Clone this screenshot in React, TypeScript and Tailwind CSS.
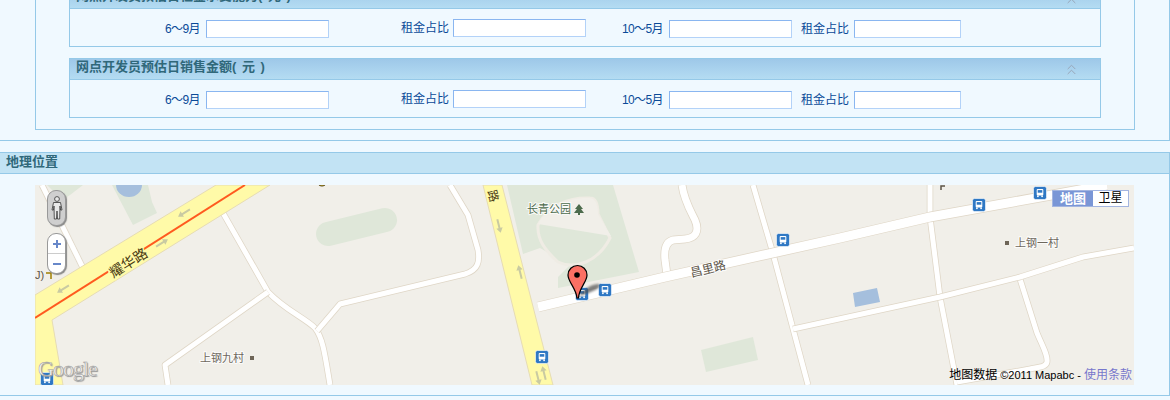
import { ChevronsUp } from 'lucide-react';

const CJK = "font-['Liberation_Sans','Noto_Sans_CJK_SC',sans-serif]";

function FieldLabel({ width, tight, children }: { width: string; tight?: boolean; children: string }) {
  return (
    <span className={`${width} ${tight ? 'tracking-[-0.6px]' : ''} shrink-0 text-right text-[12px] leading-[18px] text-[#0a4a98]`}>
      {children}
    </span>
  );
}

function Field({ width, className = '' }: { width: string; className?: string }) {
  return (
    <input
      className={`${width} ${className} h-[18px] shrink-0 border border-t-[#8ab6f0] border-l-[#8ab6f0] border-r-[#b3d2f8] border-b-[#b3d2f8] bg-white`}
    />
  );
}

function Section({ title }: { title: string }) {
  return (
    <div className="ml-[33px] w-[1032px] border border-[#95c9e8]">
      <div className="flex h-[21px] items-center justify-between border-b border-[#95c9e8] bg-gradient-to-b from-[#9ec8e9] to-[#b4dcf2] pb-[4px] pl-[6px] pr-[20px]">
        <span className="whitespace-nowrap text-[13px] font-bold leading-[16px] text-[#30687a] [word-spacing:2px]">{title}</span>
        <ChevronsUp size={17} strokeWidth={1.4} className="mt-[5px] text-[#98a6b8]" />
      </div>
      <div className="flex h-[37px] items-start pt-[11px]">
        <FieldLabel width="w-[130px]" tight>6～9月</FieldLabel>
        <Field width="w-[123px]" className="ml-[6px]" />
        <span className="-mt-px flex items-start">
          <FieldLabel width="w-[120px]">租金占比</FieldLabel>
          <Field width="w-[133px]" className="ml-[4px]" />
        </span>
        <FieldLabel width="w-[77px]" tight>10～5月</FieldLabel>
        <Field width="w-[123px]" className="ml-[6px]" />
        <FieldLabel width="w-[57px]">租金占比</FieldLabel>
        <Field width="w-[107px]" className="ml-[5px]" />
      </div>
    </div>
  );
}

function Road({ d, w = 5 }: { d: string; w?: number }) {
  return (
    <>
      <path d={d} fill="none" stroke="#dfd6c6" strokeWidth={w + 1.5} strokeLinejoin="round" />
      <path d={d} fill="none" stroke="#ffffff" strokeWidth={w} strokeLinejoin="round" />
    </>
  );
}

function Bus({ x, y }: { x: number; y: number }) {
  return (
    <g transform={`translate(${x - 6.5} ${y - 6.5})`}>
      <rect width="13" height="13" rx="2" fill="#2f78c4" stroke="#ffffff" strokeWidth="0.6" />
      <rect x="3.2" y="2.5" width="6.6" height="6.6" rx="1" fill="#ffffff" />
      <rect x="4.2" y="3.6" width="4.6" height="2.6" fill="#2f78c4" />
      <rect x="3.6" y="9" width="1.6" height="1.6" fill="#ffffff" />
      <rect x="7.8" y="9" width="1.6" height="1.6" fill="#ffffff" />
    </g>
  );
}

function Arrow({ x, y, angle, color = '#c9caa2' }: { x: number; y: number; angle: number; color?: string }) {
  return (
    <path
      transform={`translate(${x} ${y}) rotate(${angle})`}
      d="M0-7 L3.2-2 L1-2 L1 7 L-1 7 L-1-2 L-3.2-2 Z"
      fill={color}
    />
  );
}

function MapLabel({ x, y, angle = 0, size = 11, color = '#5d5548', children }: { x: number; y: number; angle?: number; size?: number; color?: string; children: string }) {
  return (
    <text
      transform={`translate(${x} ${y}) rotate(${angle})`}
      textAnchor="middle"
      fontSize={size}
      fill={color}
      stroke="#ffffff"
      strokeWidth="2"
      paintOrder="stroke"
      strokeOpacity="0.8"
    >
      {children}
    </text>
  );
}

function MapDrawing() {
  return (
    <svg viewBox="35 185 1099 200" className="block h-[200px] w-[1099px]">
      <rect x="35" y="185" width="1099" height="200" fill="#f1efe9" />

      {/* green areas and water */}
      <polygon points="47,185 83,185 70,195 62,200" fill="#dfe7d9" />
      <polygon points="112,185 148,185 152,202 157,213 133,225" fill="#dfe7d9" />
      <ellipse cx="129" cy="185" rx="13" ry="12" fill="#a5bfdd" />
      <path d="M328 234 L385 220" stroke="#dfe7d9" strokeWidth="24" strokeLinecap="round" />
      <polygon points="507,185 613,185 639,272 558,288 558,277 570,265 540,248 523,254" fill="#dfe7d9" />
      <path d="M538 225 C537 240 545 250 558 262 C575 270 598 262 610 238 L598 214 C598 208 597 198 590 198 C570 197 548 205 538 225 Z" fill="#dfe7d9" stroke="#efece4" strokeWidth="3" />
      <path d="M538 224 C548 205 570 197 590 198 C597 199 598 208 598 214 L611 236 Z" fill="#f1efe9" />
      <polygon points="701,350 753,337 758,360 706,372" fill="#dfe7d9" />
      <polygon points="853,293 877,288 880,302 855,307" fill="#a5bfdd" />

      {/* small roads */}
      <Road d="M42 185 L84 270" />
      <Road d="M223 213 L268 292 C285 310 305 318 315 328 C323 338 325 355 330 385" />
      <Road d="M268 292 L165 365 L168 385" />
      <Road d="M317 331 L340 304 L465 274 C478 270 480 262 478 250 L468 215 L450 185" />
      <Road d="M682 185 C684 200 690 210 695 220 C700 232 695 238 685 239 L673 240 C665 242 664 250 665 260 L667 275" w={7} />
      <Road d="M753 185 L772 250 L808 385" />
      <Road d="M930 185 L930 217 L940 297 L957 385" />
      <Road d="M1020 279 L1037 333 C1042 345 1048 355 1047 362 C1046 367 1040 367 1030 369 L957 382" />
      <Road d="M793 329 L940 297 L1020 277 L1083 257 L1134 248" />
      <Road d="M538 307 L665 277 L840 238 L930 217 L1107 185" w={9} />

      {/* main roads */}
      <polygon points="35,295 216,185 270,185 52,320 63,385 35,385" fill="#fffaa8" stroke="#e6dcb4" />
      <polygon points="483,185 502,185 553,385 532,385" fill="#fffaa8" stroke="#e6dcb4" />
      <path d="M35 318 L245 185" stroke="#ff5a1f" strokeWidth="2" />
      <Arrow x={63} y={289} angle={-122} />
      <Arrow x={184} y={213} angle={-122} />
      <Arrow x={162} y={243} angle={58} />
      <Arrow x={499} y={226} angle={166} />
      <Arrow x={520} y={272} angle={-14} />
      <Arrow x={544} y={373} angle={-14} />
      <Arrow x={538} y={378} angle={166} />

      {/* labels */}
      <text transform="translate(131 267) rotate(-32)" textAnchor="middle" fontSize="14" fill="#4a3b12" stroke="#fffaa8" strokeWidth="3" paintOrder="stroke">耀华路</text>
      <text transform="translate(489 197) rotate(75)" textAnchor="middle" fontSize="12" fill="#4a3b12" stroke="#fffaa8" strokeWidth="3" paintOrder="stroke">路</text>
      <MapLabel x={709} y={273} angle={-14} size={12}>昌里路</MapLabel>
      <MapLabel x={549} y={213} color="#4c6b4c">长青公园</MapLabel>
      <path d="M579 204 L583 209 L581 209 L584 213 L580 213 L580 215 L578 215 L578 213 L574 213 L577 209 L575 209 Z" fill="#4c6b4c" />
      <MapLabel x={222} y={362} color="#6e675c">上钢九村</MapLabel>
      <rect x="250" y="356" width="4" height="4" fill="#6e6557" />
      <MapLabel x={1037} y={247} color="#6e675c">上钢一村</MapLabel>
      <rect x="1005" y="241" width="4" height="4" fill="#6e6557" />
      <text x="35" y="279" fontSize="11" fill="#5d5548">J)</text>
      <path d="M46 273 H51 V279" fill="none" stroke="#a08000" strokeWidth="1.5" />
      <path d="M941 190 V186 H945" fill="none" stroke="#5d5548" strokeWidth="1.5" />
      <circle cx="322" cy="181" r="5" fill="#f4d320" stroke="#4a3b12" />

      {/* bus stops */}
      <Bus x={605} y={290} />
      <Bus x={582} y={294} />
      <Bus x={542} y={357} />
      <Bus x={783} y={240} />
      <Bus x={979} y={205} />
      <Bus x={1040} y={193} />
      <Bus x={47} y={379} />

      {/* marker */}
      <path d="M580 294 C586 288 592 284 599 284 C602 288 592 292 580 296 Z" fill="#4f4f4f" opacity="0.7" className="blur-[1px]" />
      <path d="M577 298 C576 288 568 282 568 275 A9.5 9.5 0 0 1 587 275 C587 282 579 288 578.5 298 Z" fill="#fb7064" stroke="#000000" strokeWidth="1.2" />
      <circle cx="577" cy="275" r="2.8" fill="#000000" />
    </svg>
  );
}

function MapArea() {
  return (
    <div className="relative ml-[35px] mt-[11px] h-[200px] w-[1099px] overflow-hidden">
      <MapDrawing />

      {/* pegman */}
      <div className="absolute left-[12px] top-[5px] flex h-[36px] w-[19px] items-center justify-center rounded-[9px] border border-[#999999] bg-[#cfcfcf] shadow-[1px_1px_1px_#888888]">
        <svg viewBox="0 0 12 24" className="h-[24px] w-[12px]">
          <circle cx="6" cy="3" r="2.4" fill="#e8e8e8" stroke="#333333" strokeWidth="0.8" />
          <path d="M2.5 6.5 H9.5 L11 14 H9.5 L9 10 L8.7 23 H6.5 L6 15 L5.5 23 H3.3 L3 10 L2.5 14 H1 Z" fill="#e8e8e8" stroke="#333333" strokeWidth="0.8" strokeLinejoin="round" />
        </svg>
      </div>

      {/* zoom buttons */}
      <div className="absolute left-[12px] top-[48px] flex h-[41px] w-[19px] flex-col rounded-[9px] border border-[#999999] bg-white shadow-[1px_1px_1px_#888888]">
        <div className="flex h-[20px] items-center justify-center border-b border-[#cccccc]">
          <div className="relative h-[8px] w-[8px]">
            <div className="absolute left-0 top-[3px] h-[2px] w-[8px] bg-[#6787c9]" />
            <div className="absolute left-[3px] top-0 h-[8px] w-[2px] bg-[#6787c9]" />
          </div>
        </div>
        <div className="flex flex-1 items-center justify-center">
          <div className="h-[2px] w-[8px] bg-[#6787c9]" />
        </div>
      </div>

      {/* map type */}
      <div className="absolute left-[1017px] top-[5px] flex h-[17px] w-[77px] border border-[#a3b5e0] bg-white text-[12px] leading-[15px]">
        <span className="w-[40px] bg-[#7a96d6] text-center text-[13px] font-bold text-white">地图</span>
        <span className="flex-1 text-center text-black">卫星</span>
      </div>

      <span className="absolute bottom-[4px] left-[3px] font-['Liberation_Serif',serif] text-[22px] leading-[24px] tracking-[-1px] text-[#f4f4f4] [-webkit-text-stroke:0.5px_#999999] [text-shadow:1px_1px_1px_#999999]">
        Google
      </span>

      <span className="absolute bottom-[3px] right-[2px] whitespace-nowrap text-[11px] leading-[14px] text-black">
        <span className="text-[12px]">地图数据</span> ©2011 Mapabc - <span className="text-[12px] text-[#7777cc]">使用条款</span>
      </span>
    </div>
  );
}

export default function App() {
  return (
    <div className={`${CJK} h-[400px] w-[1170px] overflow-hidden bg-[#f0f9ff]`}>
      <div className="-mt-[13px] h-[154px] border-r border-b border-[#95c9e8]">
        <div className="ml-[35px] h-[143px] w-[1100px] border-x border-b border-[#95c9e8]">
          <Section title="网点开发员预估日租金承受能力( 元 )" />
          <div className="mt-[11px]">
            <Section title="网点开发员预估日销售金额( 元 )" />
          </div>
        </div>
      </div>

      <div className="mt-[11px] h-[244px] border-t border-r border-b border-[#95c9e8]">
        <div className="flex h-[21px] items-center border-b border-[#95c9e8] bg-[#c2e3f4] pb-[3px] pl-[6px]">
          <span className="text-[13px] font-bold leading-[16px] text-[#30687a]">地理位置</span>
        </div>
        <MapArea />
      </div>
    </div>
  );
}
